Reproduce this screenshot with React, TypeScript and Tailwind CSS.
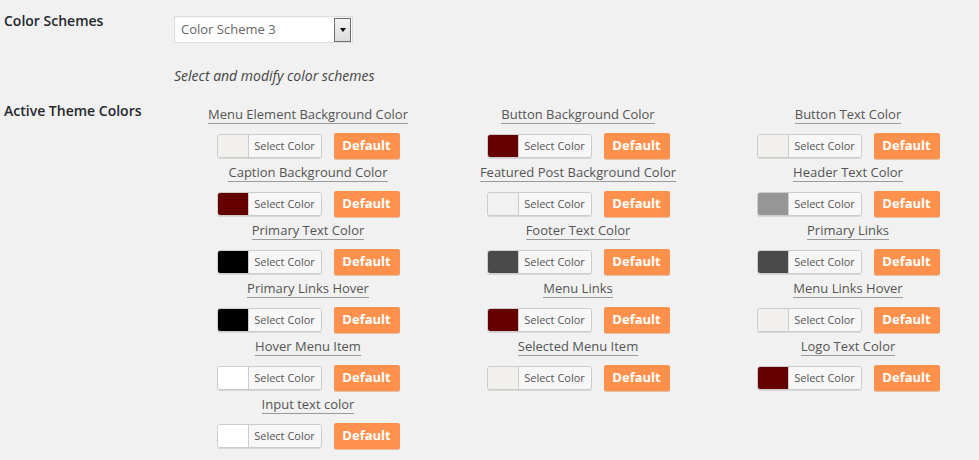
import React from "react";

type Item = { label: string; color: string };

const items: Item[] = [
  { label: "Menu Element Background Color", color: "#f1f0ec" },
  { label: "Button Background Color", color: "#640000" },
  { label: "Button Text Color", color: "#f1f0ec" },
  { label: "Caption Background Color", color: "#640000" },
  { label: "Featured Post Background Color", color: "#f1f1f1" },
  { label: "Header Text Color", color: "#969696" },
  { label: "Primary Text Color", color: "#000000" },
  { label: "Footer Text Color", color: "#4a4a4a" },
  { label: "Primary Links", color: "#4a4a4a" },
  { label: "Primary Links Hover", color: "#000000" },
  { label: "Menu Links", color: "#640000" },
  { label: "Menu Links Hover", color: "#f1f0ec" },
  { label: "Hover Menu Item", color: "#ffffff" },
  { label: "Selected Menu Item", color: "#f1f0ec" },
  { label: "Logo Text Color", color: "#640000" },
  { label: "Input text color", color: "#ffffff" },
];

function ColorItem({ item }: { item: Item }) {
  return (
    <div className="flex flex-col items-center h-[58px]">
      <span className="inline-block border-b border-[#9a9a9a] text-[13px] leading-[18px] text-[#555]">
        {item.label}
      </span>
      <div className="mt-[9px] flex items-center gap-[12px]">
        <div className="flex h-[24px] w-[105px] overflow-hidden rounded-[3px] border border-[#cccccc] shadow-[0_1px_0_#d8d8d8]">
          <div className="w-[30px] h-full" style={{ backgroundColor: item.color }} />
          <div className="flex-1 flex items-center justify-center border-l border-[#cccccc] bg-[#f7f7f7] text-[11px] text-[#555]">
            Select Color
          </div>
        </div>
        <div className="flex h-[26px] w-[66px] items-center justify-center rounded-[2px] bg-[#ff914d] text-[13px] font-bold text-white shadow-[0_1px_0_#e0c0a8]">
          Default
        </div>
      </div>
    </div>
  );
}

export default function App() {
  return (
    <div
      className="w-[979px] h-[460px] overflow-hidden bg-[#f1f1f1] text-[#23282d]"
      style={{ fontFamily: '"Open Sans", "Noto Sans", sans-serif' }}
    >
      <div className="flex">
        <div className="w-[174px] shrink-0 pl-[4px] pt-[11px] text-[14px] leading-[20px] font-semibold text-[#23282d]">
          Color Schemes
        </div>
        <div className="pt-[16px]">
          <div className="flex h-[27px] w-[179px] items-center justify-between border border-[#dddddd] bg-white pl-[6px] pr-[1px] shadow-[inset_0_1px_2px_rgba(0,0,0,0.05)]">
            <span className="text-[13px] text-[#666]">Color Scheme 3</span>
            <div className="flex h-[24px] w-[17px] items-center justify-center border border-[#6e6e6e] bg-gradient-to-b from-[#f3f3f3] to-[#dcdcdc]">
              <div className="h-0 w-0 border-l-[3.5px] border-r-[3.5px] border-t-[4px] border-l-transparent border-r-transparent border-t-black" />
            </div>
          </div>
          <div className="mt-[23px] text-[14px] italic leading-[20px] text-[#444]">
            Select and modify color schemes
          </div>
        </div>
      </div>
      <div className="mt-[15px] flex">
        <div className="w-[173px] shrink-0 pl-[4px] text-[14px] leading-[20px] font-semibold text-[#23282d]">
          Active Theme Colors
        </div>
        <div className="pt-[4px] grid grid-cols-[repeat(3,270px)] shrink-0">
          {items.map((it) => (
            <ColorItem key={it.label} item={it} />
          ))}
        </div>
      </div>
    </div>
  );
}
